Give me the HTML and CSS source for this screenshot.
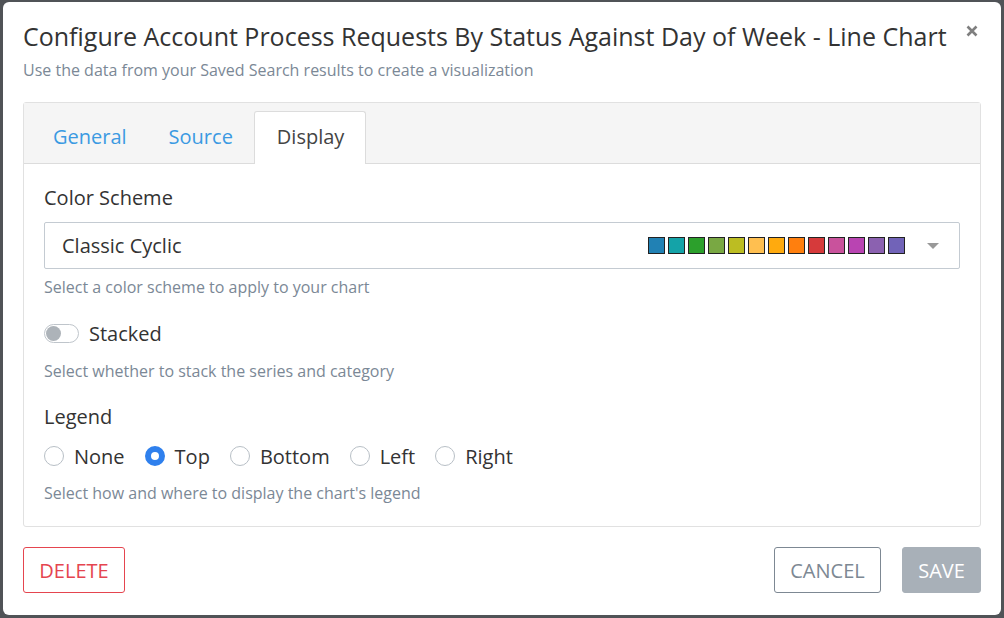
FILE: index.html
```html
<!DOCTYPE html>
<html>
<head>
<meta charset="utf-8">
<link rel="stylesheet" href="styles.css">
</head>
<body>
<div class="modal">
  <div class="modal-header">
    <div class="titles">
      <h1 class="title">Configure Account Process Requests By Status Against Day of Week - Line Chart</h1>
      <p class="subtitle">Use the data from your Saved Search results to create a visualization</p>
    </div>
    <svg class="close" width="12" height="12" viewBox="0 0 12 12"><path d="M1.5 1.5 L10.5 10.5 M10.5 1.5 L1.5 10.5" stroke="#7f7f7f" stroke-width="2.6" stroke-linecap="butt"/></svg>
  </div>
  <div class="panel">
    <div class="tabs">
      <span class="tab">General</span>
      <span class="tab">Source</span>
      <span class="tab active">Display</span>
    </div>
    <div class="panel-body">
      <div class="label">Color Scheme</div>
      <div class="select">
        <span class="select-text">Classic Cyclic</span>
        <span class="swatches">
          <i style="background:#2181b4"></i><i style="background:#14a3a8"></i><i style="background:#2ca02c"></i><i style="background:#79a843"></i><i style="background:#bcbd22"></i><i style="background:#ffbf50"></i><i style="background:#ffaa0e"></i><i style="background:#ff7f0e"></i><i style="background:#d63a3b"></i><i style="background:#c9529c"></i><i style="background:#b944b2"></i><i style="background:#8b61b0"></i><i style="background:#7163b8"></i>
        </span>
        <span class="caret"></span>
      </div>
      <div class="help help-select">Select a color scheme to apply to your chart</div>
      <div class="toggle-row"><span class="toggle"><span class="knob"></span></span><span class="toggle-label">Stacked</span></div>
      <div class="help help-toggle">Select whether to stack the series and category</div>
      <div class="label label-legend">Legend</div>
      <div class="radios">
        <label class="radio"><span class="circle"></span>None</label>
        <label class="radio"><span class="circle checked"></span>Top</label>
        <label class="radio"><span class="circle"></span>Bottom</label>
        <label class="radio"><span class="circle"></span>Left</label>
        <label class="radio"><span class="circle"></span>Right</label>
      </div>
      <div class="help help-radios">Select how and where to display the chart's legend</div>
    </div>
  </div>
  <div class="footer">
    <button class="btn btn-delete">DELETE</button>
    <div class="right-btns">
      <button class="btn btn-cancel">CANCEL</button>
      <button class="btn btn-save">SAVE</button>
    </div>
  </div>
</div>
</body>
</html>
```
FILE: styles.css
```css
* { box-sizing: border-box; }
html, body { margin: 0; padding: 0; }
body {
  width: 1004px;
  height: 618px;
  background: #505357;
  font-family: "Open Sans", "Noto Sans", sans-serif;
  overflow: hidden;
  padding: 2px 3px 3px 3px;
}
.modal {
  width: 998px;
  height: 613px;
  background: #fff;
  border-radius: 6px;
  padding: 19px 20px 20px 20px;
  display: flex;
  flex-direction: column;
}
.modal-header {
  display: flex;
  justify-content: space-between;
  align-items: flex-start;
}
.title {
  margin: 0;
  font-size: 25px;
  font-weight: 400;
  line-height: 30px;
  color: #333;
}
.subtitle {
  margin: 8px 0 0 0;
  font-size: 16px;
  line-height: 22px;
  color: #7b8896;
}
.close {
  display: block;
  margin-top: 4px;
  margin-right: 3px;
}
.panel {
  margin-top: 21px;
  border: 1px solid #e1e1e1;
  border-radius: 3px;
  height: 425px;
}
.tabs {
  background: #f5f5f5;
  border-bottom: 1px solid #dcdcdc;
  height: 61px;
  padding: 8px 0 0 8px;
  display: flex;
  align-items: flex-end;
}
.tab {
  font-size: 20px;
  color: #3b9ae2;
  padding: 0 20px;
  height: 53px;
  line-height: 50px;
  margin-bottom: -1px;
  border: 1px solid transparent;
  border-bottom: none;
}
.tab.active {
  background: #fff;
  color: #444;
  border-color: #dcdcdc;
  border-radius: 3px 3px 0 0;
  padding: 0 21px 0 22px;
}
.panel-body {
  padding: 21px 20px 0 20px;
}
.label {
  font-size: 20px;
  color: #333;
  line-height: 26px;
}
.select {
  margin-top: 11px;
  height: 47px;
  border: 1px solid #c4cbd2;
  border-radius: 2px;
  display: flex;
  align-items: center;
  padding: 0 20px 0 17px;
}
.select-text {
  font-size: 20px;
  color: #333;
  flex: 1;
}
.swatches {
  display: flex;
  gap: 3px;
}
.swatches i {
  display: block;
  width: 17px;
  height: 17px;
  border: 1px solid #222;
}
.caret {
  margin-left: 22px;
  width: 0;
  height: 0;
  border-left: 6px solid transparent;
  border-right: 6px solid transparent;
  border-top: 6px solid #999;
}
.help {
  font-size: 16px;
  color: #7b8896;
  line-height: 20px;
}
.help-select { margin-top: 8px; }
.toggle-row {
  display: flex;
  align-items: center;
  height: 26px;
  margin-top: 23px;
}
.help-toggle { margin-top: 15px; }
.label-legend { margin-top: 23px; }
.toggle {
  width: 35px;
  height: 19px;
  border: 1px solid #bfc5cb;
  border-radius: 10px;
  background: #fff;
  position: relative;
  margin-right: 10px;
}
.knob {
  position: absolute;
  left: 1px;
  top: 1px;
  width: 15px;
  height: 15px;
  border-radius: 50%;
  background: #adb3b9;
}
.toggle-label {
  font-size: 20px;
  color: #333;
}
.radios {
  display: flex;
  margin-top: 13px;
  height: 26px;
  align-items: center;
}
.radio {
  display: flex;
  align-items: center;
  font-size: 20px;
  color: #333;
  margin-right: 20px;
}
.circle {
  width: 20px;
  height: 20px;
  border: 1px solid #b8bfc6;
  border-radius: 50%;
  margin-right: 10px;
  background: #fff;
}
.circle.checked {
  border: 6px solid #2f80ed;
  background: #fff;
}
.help-radios { margin-top: 14px; }
.footer {
  margin-top: 20px;
  display: flex;
  justify-content: space-between;
}
.right-btns { display: flex; gap: 21px; }
.btn {
  font-family: "Open Sans", "Noto Sans", sans-serif;
  font-size: 20px;
  height: 46px;
  background: #fff;
  border-radius: 3px;
  padding: 0;
  cursor: pointer;
}
.btn-delete {
  width: 102px;
  border: 1px solid #e5454f;
  color: #e5454f;
}
.btn-cancel {
  width: 107px;
  border: 1px solid #7d8893;
  color: #7d8893;
}
.btn-save {
  width: 79px;
  border: 1px solid #a8b0b8;
  background: #a8b0b8;
  color: #fff;
}
```
